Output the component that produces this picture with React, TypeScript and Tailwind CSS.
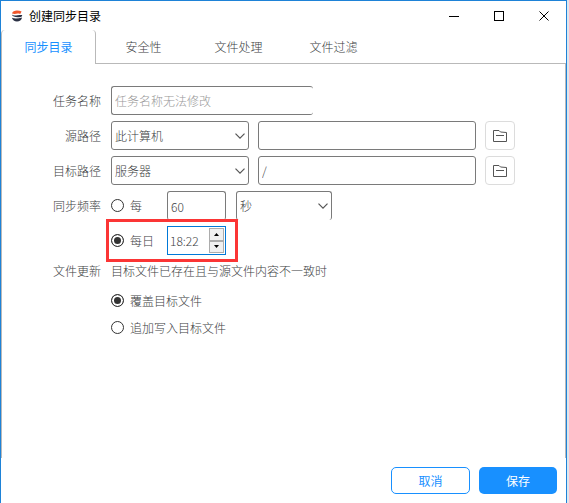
import React, { useState } from 'react';

const tabs = ['同步目录', '安全性', '文件处理', '文件过滤'];

const inputClass =
  'h-full min-w-0 rounded-[3px] border border-[#7a7a7a] bg-white px-[3px] text-[#3c3e42] outline-none';

const radioClass =
  'size-[13px] shrink-0 appearance-none rounded-full border border-[#333] bg-white checked:bg-[#333] checked:shadow-[inset_0_0_0_2px_#fff]';

const Logo = () => (
  <svg className="size-3" viewBox="0 0 12 12" fill="none">
    <path d="M1 3.6C1.6 1.4 3.6.6 6 .6c1.8 0 3.3.3 4.6 1L9.2 3.9C7.5 3.3 5.5 3.2 3.6 4.1Z" fill="#f0562b" />
    <path d="M.8 4.6c2.2 1.8 5.2.2 10.4.3-.1 1.2-.6 1.9-1.6 2.1C6.5 7.6 1.4 7.4.8 4.6Z" fill="#2b3144" />
    <path d="M.9 7.7c2.8 1.3 6.3.9 10.2-.2-.6 2.6-2.5 3.9-5.1 3.9S1.6 10.1.9 7.7Z" fill="#2b3144" />
  </svg>
);

const FolderIcon = () => (
  <svg className="size-4" viewBox="0 0 16 16" fill="none" stroke="#555">
    <path d="M1.5 13.5v-11H7L8.5 4l6 .5v9z" strokeLinejoin="round" />
    <path d="M4 7.5h8" />
  </svg>
);

const Select = ({ label, options, className }: { label: string; options: string[]; className: string }) => (
  <div className={`relative h-full shrink-0 ${className}`}>
    <select aria-label={label} className={`${inputClass} w-full appearance-none`}>
      {options.map((option) => (
        <option key={option}>{option}</option>
      ))}
    </select>
    <svg
      className="pointer-events-none absolute top-1/2 right-[3px] h-2 w-3 -translate-y-1/2"
      viewBox="0 0 12 8"
      fill="none"
      stroke="#555"
      strokeWidth="1.2"
    >
      <path d="M1.5 1.7 6 6.2l4.5-4.5" />
    </svg>
  </div>
);

const Row = ({ label, htmlFor, children }: { label?: string; htmlFor?: string; children: React.ReactNode }) => (
  <div className="flex h-[29px] items-center gap-2.5">
    <label htmlFor={htmlFor} className="w-[99px] shrink-0 text-right">
      {label}
    </label>
    {children}
  </div>
);

const PathRow = ({ label, id, options, value }: { label: string; id: string; options: string[]; value: string }) => (
  <Row label={label} htmlFor={id}>
    <div className="flex h-full flex-1 gap-[9px]">
      <Select label={`${label}类型`} options={options} className="w-[138px]" />
      <input id={id} defaultValue={value} className={`${inputClass} flex-1`} />
      <button
        type="button"
        aria-label="浏览"
        className="flex w-[30px] shrink-0 items-center justify-center rounded-[4px] border border-[#dcdcdc]"
      >
        <FolderIcon />
      </button>
    </div>
  </Row>
);

const App: React.FC = () => {
  const [activeTab, setActiveTab] = useState(tabs[0]);
  const [frequency, setFrequency] = useState('daily');
  const [updateMode, setUpdateMode] = useState('overwrite');

  return (
    <div className="min-h-screen bg-[#dfe6ee] pr-[2px] font-['Noto_Sans_CJK_SC',sans-serif] text-xs font-light text-[#3c3e42]">
      <div className="flex min-h-screen flex-col border-x border-t border-[#1e82d7] bg-white">
        {/* Title bar */}
        <header className="flex h-[29px] items-center pl-2.5 text-black">
          <Logo />
          <h1 className="ml-1.5 flex-1 font-normal">创建同步目录</h1>
          <button type="button" aria-label="最小化" className="flex h-full w-[45px] items-center justify-center">
            <svg className="size-2.5" viewBox="0 0 10 10" stroke="#000">
              <path d="M0 5.5h10" />
            </svg>
          </button>
          <button type="button" aria-label="最大化" className="flex h-full w-[45px] items-center justify-center">
            <svg className="size-2.5" viewBox="0 0 10 10" fill="none" stroke="#000" shapeRendering="crispEdges">
              <path d="M.5.5h9v9h-9z" />
            </svg>
          </button>
          <button type="button" aria-label="关闭" className="flex h-full w-[45px] items-center justify-center">
            <svg className="size-2.5" viewBox="0 0 10 10" stroke="#000">
              <path d="m.5.5 9 9m0-9-9 9" />
            </svg>
          </button>
        </header>

        {/* Tabs */}
        <nav className="flex h-[34px]">
          {tabs.map((tab) => (
            <button
              key={tab}
              type="button"
              onClick={() => setActiveTab(tab)}
              className={`w-[95px] ${
                tab === activeTab
                  ? 'rounded-t-[4px] border-x border-[#b9b9b9] font-normal text-[#1890ff]'
                  : 'border-b border-[#b9b9b9]'
              }`}
            >
              {tab}
            </button>
          ))}
          <div className="flex-1 border-b border-[#b9b9b9]" />
        </nav>

        {/* Form */}
        <main className="flex flex-1 flex-col gap-1.5 border-x border-[#b9b9b9] pt-[22px] pr-[50px]">
          <Row label="任务名称" htmlFor="task-name">
            <input
              id="task-name"
              placeholder="任务名称无法修改"
              className={`${inputClass} w-[202px] border-r-0 placeholder:text-[#999]`}
            />
          </Row>
          <PathRow label="源路径" id="source-path" options={['此计算机', '服务器']} value="" />
          <PathRow label="目标路径" id="target-path" options={['服务器', '此计算机']} value="/" />

          <Row label="同步频率">
            <div className="flex h-full items-center">
              <label className="flex w-14 items-center gap-1.5">
                <input
                  type="radio"
                  name="frequency"
                  checked={frequency === 'interval'}
                  onChange={() => setFrequency('interval')}
                  className={radioClass}
                />
                每
              </label>
              <input aria-label="间隔" defaultValue="60" className={`${inputClass} w-[59px] border-b-0`} />
            </div>
            <Select label="单位" options={['秒', '分', '时']} className="w-24 [&>select]:border-b-0" />
          </Row>

          <Row>
            <div className="relative flex h-full items-center">
              <label className="flex w-14 items-center gap-1.5">
                <input
                  type="radio"
                  name="frequency"
                  checked={frequency === 'daily'}
                  onChange={() => setFrequency('daily')}
                  className={radioClass}
                />
                每日
              </label>
              <div className="flex h-full w-[59px] border border-[#0078d7] p-px">
                <input
                  aria-label="时间"
                  defaultValue="18:22"
                  className="w-full min-w-0 flex-1 pl-px text-[#3c3e42] outline-none"
                />
                <div className="flex w-[15px] shrink-0 flex-col">
                  <button
                    type="button"
                    aria-label="增加"
                    className="flex flex-1 items-center justify-center border border-[#acacac] bg-[#f0f0f0]"
                  >
                    <svg className="h-[3px] w-[5px]" viewBox="0 0 5 3">
                      <path d="M0 3 2.5 0 5 3z" />
                    </svg>
                  </button>
                  <button
                    type="button"
                    aria-label="减少"
                    className="flex flex-1 items-center justify-center border border-[#acacac] bg-[#f0f0f0]"
                  >
                    <svg className="h-[3px] w-[5px]" viewBox="0 0 5 3">
                      <path d="M0 0 2.5 3 5 0z" />
                    </svg>
                  </button>
                </div>
              </div>
              {/* Highlight around the daily option */}
              <div className="pointer-events-none absolute -inset-y-[7px] -right-3 -left-[5px] border-3 border-[#fb3535]" />
            </div>
          </Row>

          <div className="flex gap-2.5">
            <span className="w-[99px] shrink-0 text-right leading-5">文件更新</span>
            <div>
              <p className="mb-1.5 leading-5">目标文件已存在且与源文件内容不一致时</p>
              <label className="flex h-[27px] items-center gap-1.5">
                <input
                  type="radio"
                  name="update-mode"
                  checked={updateMode === 'overwrite'}
                  onChange={() => setUpdateMode('overwrite')}
                  className={radioClass}
                />
                覆盖目标文件
              </label>
              <label className="flex h-[27px] items-center gap-1.5">
                <input
                  type="radio"
                  name="update-mode"
                  checked={updateMode === 'append'}
                  onChange={() => setUpdateMode('append')}
                  className={radioClass}
                />
                追加写入目标文件
              </label>
            </div>
          </div>
        </main>

        {/* Footer */}
        <footer className="flex justify-end gap-[9px] p-[9px] font-normal">
          <button type="button" className="h-[27px] w-[79px] rounded-[5px] border border-[#1890ff] text-[#1890ff]">
            取消
          </button>
          <button type="button" className="h-[27px] w-[78px] rounded-[5px] bg-[#1890ff] text-white">
            保存
          </button>
        </footer>
      </div>
    </div>
  );
};

export default App;
